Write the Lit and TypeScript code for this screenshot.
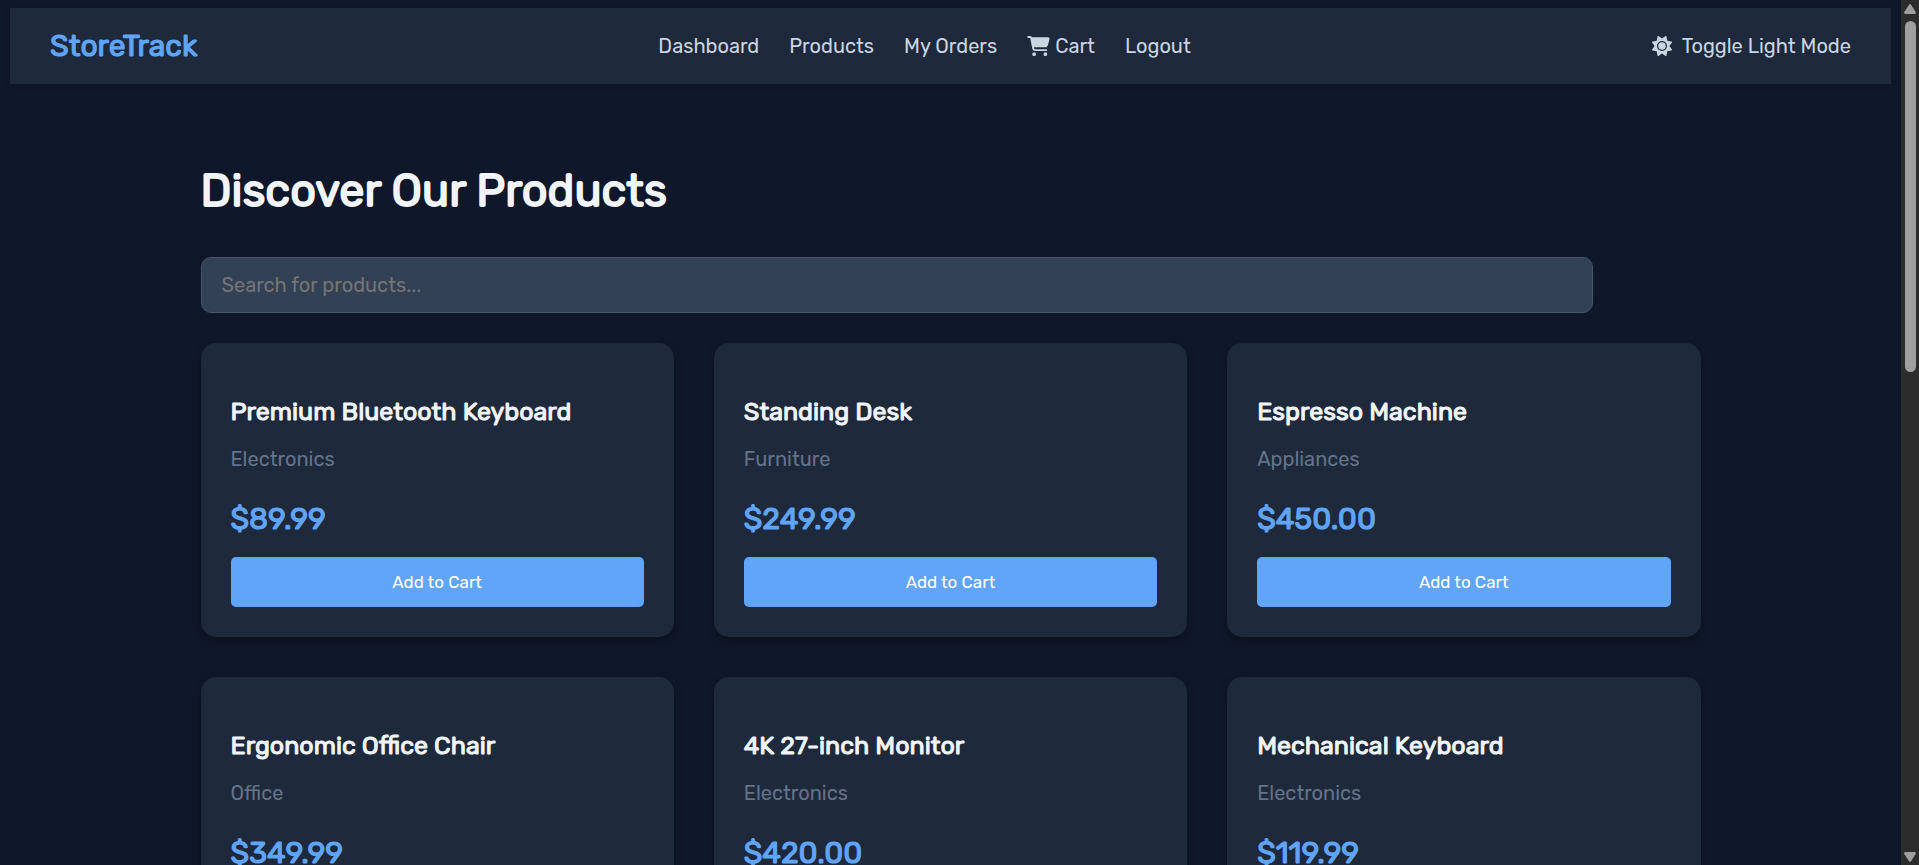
import { LitElement, html, css } from "lit";
import { customElement, property, state } from "lit/decorators.js";

interface Product {
  name: string;
  category: string;
  price: string;
}

const PRODUCTS: Product[] = [
  { name: "Premium Bluetooth Keyboard", category: "Electronics", price: "$89.99" },
  { name: "Standing Desk", category: "Furniture", price: "$249.99" },
  { name: "Espresso Machine", category: "Appliances", price: "$450.00" },
  { name: "Ergonomic Office Chair", category: "Office", price: "$349.99" },
  { name: "4K 27-inch Monitor", category: "Electronics", price: "$420.00" },
  { name: "Mechanical Keyboard", category: "Electronics", price: "$119.99" },
];

const cartIcon = html`<svg class="icon cart" viewBox="0 0 576 512" aria-hidden="true">
  <path d="M0 24C0 10.7 10.7 0 24 0H69.5c22 0 41.5 12.8 50.6 32h411c26.3 0 45.5 25 38.6 50.4l-41 152.3c-8.5 31.4-37 53.3-69.5 53.3H170.7l5.4 28.5c2.2 11.3 12.1 19.5 23.6 19.5H488c13.3 0 24 10.7 24 24s-10.7 24-24 24H199.7c-34.6 0-64.3-24.6-70.7-58.5L77.4 54.5c-.7-3.8-4-6.5-7.9-6.5H24C10.7 48 0 37.3 0 24zM128 464a48 48 0 1 1 96 0 48 48 0 1 1 -96 0zm336-48a48 48 0 1 1 0 96 48 48 0 1 1 0-96z"/>
</svg>`;

const sunIcon = html`<svg class="icon" viewBox="0 0 512 512" aria-hidden="true">
  <path d="M361.5 1.2c5 2.1 8.6 6.6 9.6 11.9L391 121l107.9 19.8c5.3 1 9.8 4.6 11.9 9.6s1.5 10.7-1.6 15.2L446.9 256l62.3 90.3c3.1 4.5 3.7 10.2 1.6 15.2s-6.6 8.6-11.9 9.6L391 391 371.1 498.9c-1 5.3-4.6 9.8-9.6 11.9s-10.7 1.5-15.2-1.6L256 446.9l-90.3 62.3c-4.5 3.1-10.2 3.7-15.2 1.6s-8.6-6.6-9.6-11.9L121 391 13.1 371.1c-5.3-1-9.8-4.6-11.9-9.6s-1.5-10.7 1.6-15.2L65.1 256 2.8 165.7c-3.1-4.5-3.7-10.2-1.6-15.2s6.6-8.6 11.9-9.6L121 121 140.9 13.1c1-5.3 4.6-9.8 9.6-11.9s10.7-1.5 15.2 1.6L256 65.1 346.3 2.8c4.5-3.1 10.2-3.7 15.2-1.6zM160 256a96 96 0 1 1 192 0 96 96 0 1 1-192 0zm224 0a128 128 0 1 0-256 0 128 128 0 1 0 256 0z"/>
</svg>`;

@customElement("product-card")
class ProductCard extends LitElement {
  @property({ attribute: false }) product!: Product;

  static styles = css`
    :host {
      display: flex;
      flex-direction: column;
      box-sizing: border-box;
      padding: 30px;
      border-radius: 15px;
      background: #1e293b;
      box-shadow: 0 4px 8px rgba(0, 0, 0, 0.3);
    }
    .name {
      margin: 24px 0 20px;
      font-size: 25px;
      line-height: 30px;
      font-weight: 400;
      color: #f1f5f9;
      -webkit-text-stroke: 0.04em currentColor;
    }
    .category {
      margin: 0 0 30px;
      line-height: 24px;
      color: #64748b;
    }
    .price {
      margin: 0 0 20px;
      font-size: 30px;
      line-height: 36px;
      color: #60a5fa;
      -webkit-text-stroke: 0.04em currentColor;
    }
    .add {
      padding: 15px;
      border: 0;
      border-radius: 5px;
      background: #60a5fa;
      color: #fff;
      font-family: inherit;
      font-size: 17px;
      line-height: 20px;
      cursor: pointer;
    }
    .add:hover {
      background: #3b82f6;
    }
  `;

  render() {
    return html`
      <h3 class="name">${this.product.name}</h3>
      <p class="category">${this.product.category}</p>
      <p class="price">${this.product.price}</p>
      <button class="add" type="button">Add to Cart</button>
    `;
  }
}

@customElement("app-root")
class AppRoot extends LitElement {
  @state() private query = "";

  static styles = css`
    :host {
      display: grid;
      grid-template-columns: minmax(0, 1fr) 18px;
      height: 100vh;
      overflow: hidden;
      background: #0f172a;
      color: #cbd5e1;
      font-family: Rubik, Roboto, sans-serif;
      font-size: 20px;
    }
    .page {
      box-sizing: border-box;
      min-height: 0;
      padding: 8px 10px;
      overflow: hidden;
    }
    .header {
      display: flex;
      flex-wrap: wrap;
      align-items: center;
      justify-content: space-between;
      padding: 20px 40px;
      background: #1e293b;
      line-height: 36px;
      box-shadow: 0 2px 5px rgba(0, 0, 0, 0.1);
    }
    .logo {
      font-size: 30px;
      color: #60a5fa;
      text-decoration: none;
      -webkit-text-stroke: 0.04em currentColor;
    }
    .nav {
      display: flex;
      flex-wrap: wrap;
      gap: 0 30px;
    }
    .link {
      display: flex;
      align-items: center;
      gap: 5px;
      color: inherit;
      text-decoration: none;
    }
    .toggle {
      display: flex;
      align-items: center;
      gap: 10px;
      padding: 0;
      border: 0;
      background: none;
      color: inherit;
      font: inherit;
      line-height: 36px;
      cursor: pointer;
    }
    .icon {
      width: 20px;
      height: 20px;
      fill: currentColor;
    }
    .cart {
      width: 23px;
    }
    .main {
      max-width: 1500px;
      margin: 0 auto;
      padding: 80px 0 40px;
    }
    .title {
      margin: 0 0 40px;
      font-size: 45px;
      line-height: 53px;
      font-weight: 400;
      color: #f1f5f9;
      -webkit-text-stroke: 0.04em currentColor;
    }
    .search {
      display: block;
      box-sizing: border-box;
      width: calc(90% + 42px);
      height: 56px;
      margin: 0 0 30px;
      padding: 0 20px;
      border: 1px solid #475569;
      border-radius: 10px;
      background: #334155;
      color: #f1f5f9;
      font: inherit;
    }
    .search::placeholder {
      color: #757575;
    }
    .grid {
      display: grid;
      grid-template-columns: repeat(auto-fill, minmax(400px, 1fr));
      gap: 40px;
    }
    .scrollbar {
      display: flex;
      flex-direction: column;
      align-items: center;
      gap: 7px;
      padding: 4px 0 3px;
      background: #2c2c2c;
    }
    .arrow {
      flex: none;
      width: 12px;
      height: 10px;
      fill: #9f9f9f;
    }
    .rail {
      flex: 1;
      width: 11px;
    }
    .thumb {
      height: 42.6%;
      border-radius: 6px;
      background: #9f9f9f;
    }
  `;

  private onSearch(e: Event) {
    this.query = (e.target as HTMLInputElement).value;
  }

  render() {
    const q = this.query.trim().toLowerCase();
    const shown = PRODUCTS.filter((p) => p.name.toLowerCase().includes(q));
    return html`
      <div class="page">
        <header class="header">
          <a class="logo" href="#">StoreTrack</a>
          <nav class="nav">
            <a class="link" href="#dashboard">Dashboard</a>
            <a class="link" href="#products">Products</a>
            <a class="link" href="#orders">My Orders</a>
            <a class="link" href="#cart">${cartIcon}Cart</a>
            <a class="link" href="#logout">Logout</a>
          </nav>
          <button class="toggle" type="button">${sunIcon}Toggle Light Mode</button>
        </header>
        <main class="main">
          <h1 class="title">Discover Our Products</h1>
          <input
            class="search"
            type="text"
            aria-label="Search for products"
            placeholder="Search for products..."
            .value=${this.query}
            @input=${this.onSearch}
          />
          <section class="grid">
            ${shown.map((p) => html`<product-card .product=${p}></product-card>`)}
          </section>
        </main>
      </div>
      <div class="scrollbar" aria-hidden="true">
        <svg class="arrow" viewBox="0 0 12 10"><path d="M5 .8Q6-.6 7 .8L11.700 8Q12.200 10 10.500 10H1.500Q-.2 10 .3 8Z"/></svg>
        <div class="rail"><div class="thumb"></div></div>
        <svg class="arrow" viewBox="0 0 12 10"><path d="M5 9.200Q6 10.600 7 9.200L11.700 2Q12.200 0 10.500 0H1.500Q-.2 0 .3 2Z"/></svg>
      </div>
    `;
  }
}
